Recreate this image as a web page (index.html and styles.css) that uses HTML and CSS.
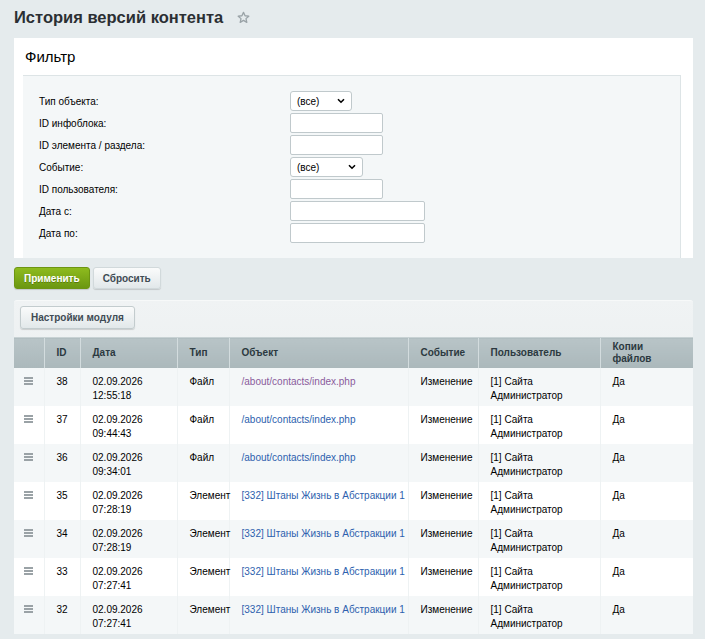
FILE: index.html
```html
<!DOCTYPE html>
<html lang="ru">
<head>
    <meta charset="UTF-8">
    <meta name="viewport" content="width=device-width, initial-scale=1.0">
    <title>История версий контента</title>
    <link rel="stylesheet" href="styles.css">
</head>
<body>

    <div class="page">
        <h1 class="page-title">История версий контента
            <svg class="star" width="13" height="13" viewBox="0 0 24 24"><path d="M12 2.5l2.9 6.3 6.9.7-5.2 4.6 1.5 6.8L12 17.4l-6.1 3.5 1.5-6.8-5.2-4.6 6.9-.7z" fill="none" stroke="#9aa3a7" stroke-width="2.4" stroke-linejoin="round"/></svg>
        </h1>

        <!-- Фильтр -->
        <div class="filter">
            <div class="filter-title">Фильтр</div>
            <div class="filter-body">
                <div class="filter-row">
                    <label>Тип объекта:</label>
                    <span class="select w62">(все)<svg width="8" height="6" viewBox="0 0 8 6"><path d="M1 1.2l3 3 3-3" fill="none" stroke="#000" stroke-width="1.6"/></svg></span>
                </div>
                <div class="filter-row">
                    <label>ID инфоблока:</label>
                    <input type="text" class="w93">
                </div>
                <div class="filter-row">
                    <label>ID элемента / раздела:</label>
                    <input type="text" class="w93">
                </div>
                <div class="filter-row">
                    <label>Событие:</label>
                    <span class="select w73">(все)<svg width="8" height="6" viewBox="0 0 8 6"><path d="M1 1.2l3 3 3-3" fill="none" stroke="#000" stroke-width="1.6"/></svg></span>
                </div>
                <div class="filter-row">
                    <label>ID пользователя:</label>
                    <input type="text" class="w93">
                </div>
                <div class="filter-row">
                    <label>Дата с:</label>
                    <input type="text" class="w135">
                </div>
                <div class="filter-row">
                    <label>Дата по:</label>
                    <input type="text" class="w135">
                </div>
            </div>
        </div>

        <div class="filter-buttons">
            <button class="btn btn-green">Применить</button>
            <button class="btn">Сбросить</button>
        </div>

        <!-- Список -->
        <div class="list">
            <div class="list-toolbar">
                <button class="btn btn-toolbar">Настройки модуля</button>
            </div>
            <table class="list-table">
                <colgroup>
                    <col style="width:30px"><col style="width:36px"><col style="width:97px"><col style="width:52px">
                    <col style="width:179px"><col style="width:70px"><col style="width:122px"><col style="width:93px">
                </colgroup>
                <thead>
                    <tr>
                        <th></th>
                        <th>ID</th>
                        <th>Дата</th>
                        <th>Тип</th>
                        <th>Объект</th>
                        <th>Событие</th>
                        <th>Пользователь</th>
                        <th>Копии<br>файлов</th>
                    </tr>
                </thead>
                <tbody>
                    <tr>
                        <td class="menu"><span class="burger"></span></td>
                        <td>38</td>
                        <td>02.09.2026<br>12:55:18</td>
                        <td>Файл</td>
                        <td><a href="#" class="visited">/about/contacts/index.php</a></td>
                        <td>Изменение</td>
                        <td>[1] Сайта<br>Администратор</td>
                        <td>Да</td>
                    </tr>
                    <tr>
                        <td class="menu"><span class="burger"></span></td>
                        <td>37</td>
                        <td>02.09.2026<br>09:44:43</td>
                        <td>Файл</td>
                        <td><a href="#">/about/contacts/index.php</a></td>
                        <td>Изменение</td>
                        <td>[1] Сайта<br>Администратор</td>
                        <td>Да</td>
                    </tr>
                    <tr>
                        <td class="menu"><span class="burger"></span></td>
                        <td>36</td>
                        <td>02.09.2026<br>09:34:01</td>
                        <td>Файл</td>
                        <td><a href="#">/about/contacts/index.php</a></td>
                        <td>Изменение</td>
                        <td>[1] Сайта<br>Администратор</td>
                        <td>Да</td>
                    </tr>
                    <tr>
                        <td class="menu"><span class="burger"></span></td>
                        <td>35</td>
                        <td>02.09.2026<br>07:28:19</td>
                        <td>Элемент</td>
                        <td><a href="#">[332] Штаны Жизнь в Абстракции 1</a></td>
                        <td>Изменение</td>
                        <td>[1] Сайта<br>Администратор</td>
                        <td>Да</td>
                    </tr>
                    <tr>
                        <td class="menu"><span class="burger"></span></td>
                        <td>34</td>
                        <td>02.09.2026<br>07:28:19</td>
                        <td>Элемент</td>
                        <td><a href="#">[332] Штаны Жизнь в Абстракции 1</a></td>
                        <td>Изменение</td>
                        <td>[1] Сайта<br>Администратор</td>
                        <td>Да</td>
                    </tr>
                    <tr>
                        <td class="menu"><span class="burger"></span></td>
                        <td>33</td>
                        <td>02.09.2026<br>07:27:41</td>
                        <td>Элемент</td>
                        <td><a href="#">[332] Штаны Жизнь в Абстракции 1</a></td>
                        <td>Изменение</td>
                        <td>[1] Сайта<br>Администратор</td>
                        <td>Да</td>
                    </tr>
                    <tr>
                        <td class="menu"><span class="burger"></span></td>
                        <td>32</td>
                        <td>02.09.2026<br>07:27:41</td>
                        <td>Элемент</td>
                        <td><a href="#">[332] Штаны Жизнь в Абстракции 1</a></td>
                        <td>Изменение</td>
                        <td>[1] Сайта<br>Администратор</td>
                        <td>Да</td>
                    </tr>
                </tbody>
            </table>
        </div>
    </div>

</body>
</html>
```

FILE: styles.css
```css
body {
    margin: 0;
    background-color: #e5ebed;
    font-family: "Liberation Sans", Arial, sans-serif;
    font-size: 10px;
    color: #000;
}
.page {
    padding: 4px 12px 0 14px;
}
.page-title {
    margin: 0;
    height: 34px;
    font-size: 16.5px;
    line-height: 26px;
    font-weight: bold;
    color: #2b2f33;
}
.star {
    margin-left: 9px;
    vertical-align: -1px;
}

/* Фильтр */
.filter {
    background-color: #fff;
    padding: 0 12px 0 9px;
}
.filter-title {
    height: 37px;
    padding-left: 2px;
    font-size: 15px;
    line-height: 38px;
    color: #000;
}
.filter-body {
    background-color: #f4f7f8;
    border-top: 1px solid #dde4e6;
    border-right: 1px solid #dde4e6;
    padding: 15px 0 15px 16px;
    display: flex;
    flex-direction: column;
    gap: 2px;
}
.filter-row {
    display: grid;
    grid-template-columns: 251px auto;
    align-items: center;
    height: 20px;
}
.filter-row label {
    color: #000;
}
.filter-row input {
    box-sizing: border-box;
    height: 20px;
    border: 1px solid #c0c9cc;
    border-radius: 2px;
    background: #fff;
    margin: 0;
}
.select {
    box-sizing: border-box;
    height: 20px;
    border: 1px solid #c0c9cc;
    border-radius: 3px;
    background: #fff;
    display: flex;
    align-items: center;
    justify-content: space-between;
    padding: 0 6px 0 6px;
    font-size: 10px;
}
.w62 { width: 62px; }
.w73 { width: 73px; }
.w93 { width: 93px; }
.w135 { width: 135px; }

.filter-buttons {
    display: flex;
    gap: 3px;
    padding: 9px 0 11px;
}
.btn {
    box-sizing: border-box;
    height: 22px;
    padding: 0 9px;
    border: 1px solid #d1d9db;
    border-radius: 3px;
    background: linear-gradient(#fafbfb, #e2e8ea);
    box-shadow: 0 1px 1px rgba(0, 0, 0, 0.15);
    font-family: "Liberation Sans", Arial, sans-serif;
    font-size: 10px;
    font-weight: bold;
    color: #3f4b54;
}
.btn-green {
    border-color: #6d9512;
    background: linear-gradient(#8ebb1e, #6b9711);
    color: #fff;
    text-shadow: 0 1px 0 rgba(0, 0, 0, 0.25);
}

/* Список */
.list {
    border-radius: 3px 3px 0 0;
    background: linear-gradient(#f0f3f4, #dde4e5);
    border-top: 1px solid #f7f9f9;
}
.list-toolbar {
    padding: 5px 6px 8px;
}
.btn-toolbar {
    height: 23px;
    padding: 0 10px;
    border-color: #c3ccce;
    font-weight: bold;
}
.list-table {
    width: 679px;
    border-collapse: collapse;
    table-layout: fixed;
}
.list-table th {
    height: 30px;
    padding: 0 4px 0 12px;
    background: linear-gradient(#b8c4c7, #abb8bb);
    border-top: 1px solid #c8d2d4;
    border-left: 1px solid #d3dcde;
    text-align: left;
    font-weight: bold;
    color: #2c3940;
    line-height: 12px;
}
.list-table th:first-child {
    border-left: none;
}
.list-table td {
    padding: 7px 4px 3px 12px;
    line-height: 14px;
    height: 28px;
    vertical-align: top;
    border-left: 1px solid #eef2f3;
}
.list-table td:first-child {
    border-left: none;
}
.list-table tbody tr:nth-child(odd) td {
    background-color: #f4f7f8;
}
.list-table tbody tr:nth-child(even) td {
    background-color: #fff;
}
.list-table td.menu {
    padding: 9px 0 0 10px;
}
.burger {
    display: block;
    width: 9px;
    height: 2px;
    background: #9aa2a6;
    box-shadow: 0 3px 0 #9aa2a6, 0 6px 0 #9aa2a6;
}
.list-table a {
    color: #2d5fae;
    text-decoration: none;
    white-space: nowrap;
}
.list-table a.visited {
    color: #8a5c9c;
}
```
